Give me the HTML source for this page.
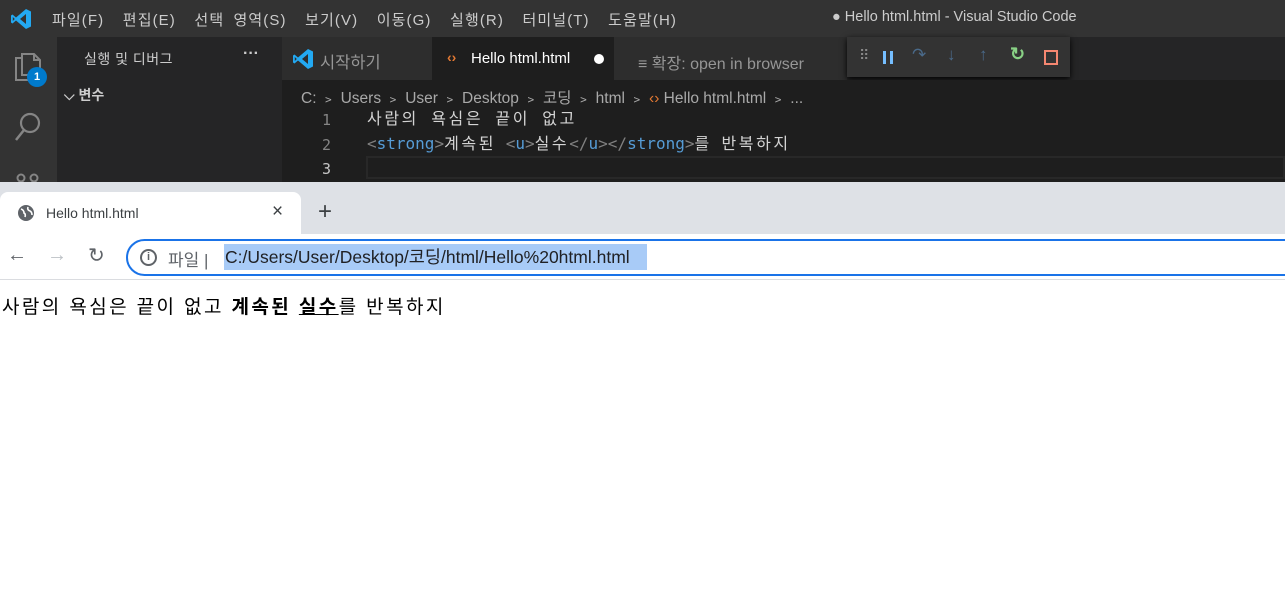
<!DOCTYPE html>
<html><head><meta charset="utf-8"><style>
*{margin:0;padding:0;box-sizing:border-box}
body{width:1285px;height:598px;overflow:hidden;background:#fff;position:relative;font-family:"Liberation Sans","Noto Sans CJK KR",sans-serif}
.a{position:absolute}
.t{color:#ccc;font-size:14px;white-space:nowrap}
.k{letter-spacing:2.6px}
</style></head><body>
<div class="a" style="left:0;top:0;width:1285px;height:37px;background:#333"></div>
<svg class="a" style="left:10px;top:8px" width="22" height="22" viewBox="0 0 22 22"><path d="M16 1 L21 3.5 V18.5 L16 21 L6 12.5 L2.5 15.5 L1 14.5 V7.5 L2.5 6.5 L6 9.5 Z M16 6 L10 11 L16 16 Z M2.8 9 V13 L4.8 11 Z" fill="#23a9f2"/></svg>
<div class="a t" style="left:52px;top:9px;font-size:15px;letter-spacing:1.1px;word-spacing:4px">파일(F)&nbsp; 편집(E)&nbsp; 선택 영역(S)&nbsp; 보기(V)&nbsp; 이동(G)&nbsp; 실행(R)&nbsp; 터미널(T)&nbsp; 도움말(H)</div>
<div class="a t" style="left:832px;top:9px;font-size:14.5px">● Hello html.html - Visual Studio Code</div>
<div class="a" style="left:0;top:37px;width:57px;height:145px;background:#333"></div>
<svg class="a" style="left:12px;top:50px" width="32" height="34" viewBox="0 0 32 34"><path d="M10 8 H4 V30 H20 V25 M10 4 H22 L28 10 V25 H10 Z M22 4 V10 H28" fill="none" stroke="#858585" stroke-width="2"/></svg>
<div class="a" style="left:27px;top:67px;width:20px;height:20px;border-radius:50%;background:#007acc;color:#fff;font-size:11px;font-weight:bold;text-align:center;line-height:20px">1</div>
<svg class="a" style="left:12px;top:110px" width="32" height="34" viewBox="0 0 32 34"><circle cx="18" cy="13" r="9" fill="none" stroke="#858585" stroke-width="2.2"/><path d="M12 20 L4 30" stroke="#858585" stroke-width="2.5"/></svg>
<svg class="a" style="left:14px;top:170px" width="30" height="12"><circle cx="7" cy="8" r="3.5" fill="none" stroke="#858585" stroke-width="2"/><circle cx="20" cy="8" r="3.5" fill="none" stroke="#858585" stroke-width="2"/></svg>
<div class="a" style="left:57px;top:37px;width:225px;height:145px;background:#252526"></div>
<div class="a t" style="left:84px;top:49px;font-size:14px;letter-spacing:0.5px">실행 및 디버그</div>
<div class="a t" style="left:243px;top:45px;font-size:16px;font-weight:bold">···</div>
<div class="a t" style="left:64px;top:85px;font-size:14px;font-weight:bold">⌵ 변수</div>
<div class="a" style="left:282px;top:37px;width:1003px;height:43px;background:#252526"></div>
<div class="a" style="left:282px;top:37px;width:150px;height:43px;background:#2d2d2d"></div>
<svg class="a" style="left:292px;top:48px" width="22" height="22" viewBox="0 0 22 22"><path d="M16 1 L21 3.5 V18.5 L16 21 L6 12.5 L2.5 15.5 L1 14.5 V7.5 L2.5 6.5 L6 9.5 Z M16 6 L10 11 L16 16 Z M2.8 9 V13 L4.8 11 Z" fill="#23a9f2"/></svg>
<div class="a t" style="left:320px;top:49px;font-size:16.5px;color:#969696">시작하기</div>
<div class="a" style="left:432px;top:37px;width:182px;height:43px;background:#1e1e1e"></div>
<div class="a t" style="left:447px;top:49px;font-size:14px;color:#e37933;font-weight:bold">‹›</div>
<div class="a t" style="left:471px;top:50px;font-size:15px;color:#fff">Hello html.html</div>
<div class="a" style="left:594px;top:54px;width:10px;height:10px;border-radius:50%;background:#fff"></div>
<div class="a" style="left:614px;top:37px;width:233px;height:43px;background:#2d2d2d"></div>
<div class="a t" style="left:638px;top:50px;font-size:16px;color:#969696">≡ 확장: open in browser</div>
<div class="a" style="left:847px;top:37px;width:223px;height:40px;background:#333;box-shadow:0 2px 6px #000"></div>
<div class="a t" style="left:859px;top:47px;font-size:14px;color:#888">⠿</div>
<div class="a" style="left:883px;top:51px;width:3px;height:13px;background:#75beff"></div>
<div class="a" style="left:890px;top:51px;width:3px;height:13px;background:#75beff"></div>
<div class="a t" style="left:912px;top:45px;font-size:17px;color:#4a6a8a">↷</div>
<div class="a t" style="left:947px;top:45px;font-size:17px;color:#4a6a8a">↓</div>
<div class="a t" style="left:979px;top:45px;font-size:17px;color:#4a6a8a">↑</div>
<div class="a t" style="left:1010px;top:44px;font-size:18px;color:#89d185;font-weight:bold">↻</div>
<div class="a" style="left:1044px;top:50px;width:14px;height:15px;border:2px solid #f48771"></div>
<div class="a" style="left:282px;top:80px;width:1003px;height:102px;background:#1e1e1e"></div>
<div class="a t" style="left:301px;top:86px;font-size:15.5px;color:#a9a9a9">C: ﹥ Users ﹥ User ﹥ Desktop ﹥ 코딩 ﹥ html ﹥ <span style="color:#e37933">‹›</span> Hello html.html ﹥ ...</div>
<div class="a" style="left:366px;top:156px;width:919px;height:23px;border:2px solid #282828"></div>
<div class="a t" style="left:322px;top:108px;font-family:'DejaVu Sans Mono','Noto Sans CJK KR',monospace;font-size:15px;line-height:24.5px;color:#858585">1<br>2<br><span style="color:#c6c6c6">3</span></div>
<div class="a t" style="left:367px;top:107px;font-family:'DejaVu Sans Mono','Noto Sans CJK KR',monospace;font-size:16px;line-height:24.5px;color:#d4d4d4"><span class="k">사람의 욕심은 끝이 없고</span><br><span style="color:#808080">&lt;</span><span style="color:#569cd6">strong</span><span style="color:#808080">&gt;</span><span class="k">계속된</span> <span style="color:#808080">&lt;</span><span style="color:#569cd6">u</span><span style="color:#808080">&gt;</span><span class="k">실수</span><span style="color:#808080">&lt;/</span><span style="color:#569cd6">u</span><span style="color:#808080">&gt;&lt;/</span><span style="color:#569cd6">strong</span><span style="color:#808080">&gt;</span><span class="k">를</span> <span class="k">반복하지</span></div>
<div class="a" style="left:0;top:182px;width:1285px;height:52px;background:#dee1e6"></div>
<div class="a" style="left:0;top:192px;width:301px;height:44px;background:#fff;border-radius:8px 8px 0 0"></div>
<svg class="a" style="left:17px;top:204px" width="18" height="18" viewBox="0 0 18 18"><circle cx="9" cy="9" r="8" fill="#5f6368"/><path d="M4 5 Q7 6 7 9 Q9 10 8 13 M11 3 Q10 6 13 7 Q15 8 15 11" stroke="#fff" stroke-width="1.6" fill="none"/></svg>
<div class="a" style="left:46px;top:205px;font-size:14px;color:#3c4043">Hello html.html</div>
<div class="a" style="left:272px;top:201px;font-size:19px;color:#3c4043">×</div>
<div class="a" style="left:318px;top:198px;font-size:24px;color:#3c4043">+</div>
<div class="a" style="left:0;top:234px;width:1285px;height:46px;background:#fff;border-bottom:1px solid #dadce0"></div>
<div class="a" style="left:7px;top:244px;font-size:20px;color:#5f6368">←</div>
<div class="a" style="left:47px;top:244px;font-size:20px;color:#bdc1c6">→</div>
<div class="a" style="left:88px;top:243px;font-size:20px;color:#5f6368">↻</div>
<div class="a" style="left:126px;top:239px;width:1180px;height:37px;border:2px solid #1a73e8;border-radius:19px"></div>
<div class="a" style="left:140px;top:249px;width:17px;height:17px;border:2px solid #5f6368;border-radius:50%;font-size:11px;font-weight:bold;color:#5f6368;text-align:center;line-height:13px">i</div>
<div class="a" style="left:168px;top:246px;font-size:17px;color:#5f6368">파일 |</div>
<div class="a" style="left:224px;top:244px;width:423px;height:26px;background:#a8cbf7;font-size:17.5px;line-height:26px;color:#202124;padding:0 1px;white-space:nowrap;overflow:hidden">C:/Users/User/Desktop/코딩/html/Hello%20html.html</div>
<div class="a" style="left:2px;top:292px;font-size:19px;letter-spacing:2.4px;color:#000;white-space:nowrap">사람의 욕심은 끝이 없고 <b>계속된 <u>실수</u></b>를 반복하지</div>
</body></html>
